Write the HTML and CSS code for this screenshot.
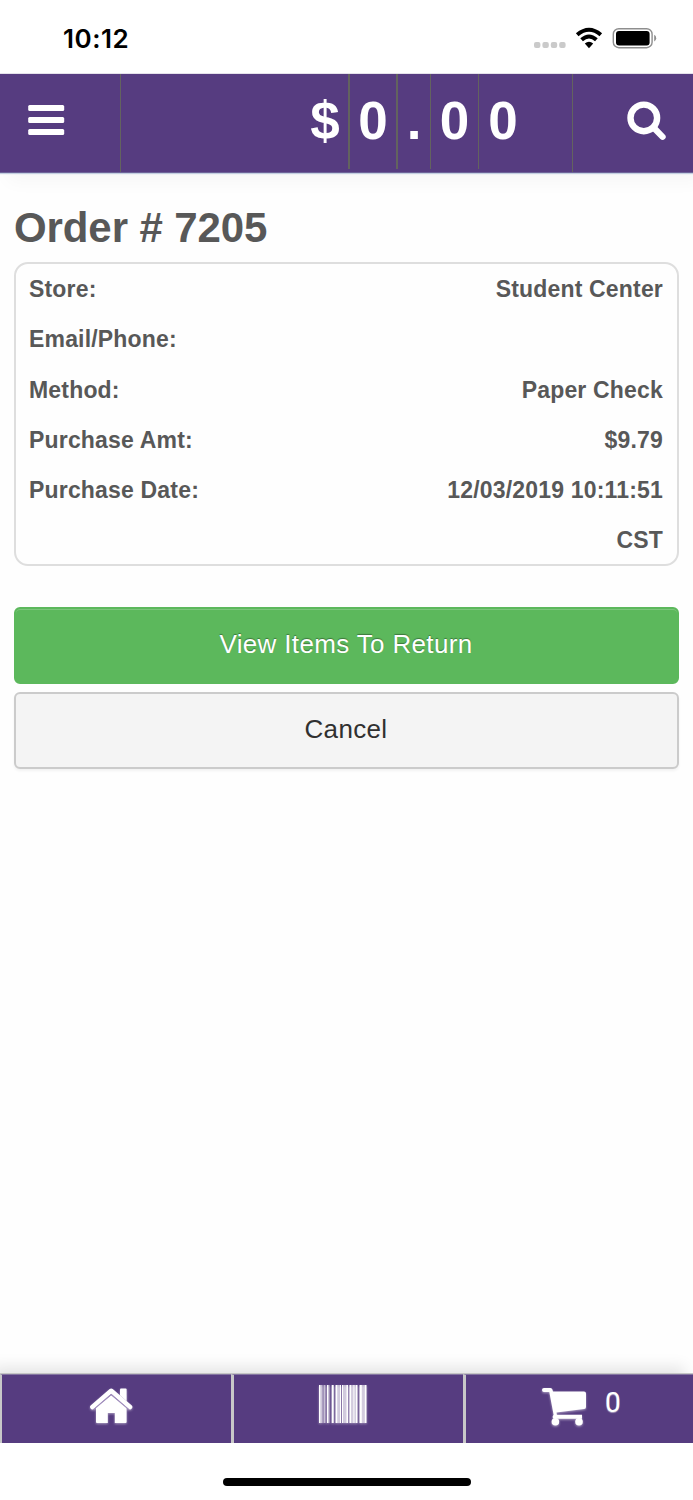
FILE: index.html
```html
<!DOCTYPE html>
<html lang="en">
<head>
<meta charset="utf-8">
<title>Order # 7205</title>
<link rel="stylesheet" href="styles.css">
</head>
<body>
<div class="status">
  <span class="clock">10:12</span>
  <svg class="status-icons" viewBox="0 0 126 24" width="126" height="24">
    <g fill="#cacaca"><rect x="4" y="14" width="6.4" height="6" rx="2"/><rect x="12.4" y="14" width="6.4" height="6" rx="2"/><rect x="20.8" y="14" width="6.4" height="6" rx="2"/><rect x="29.2" y="14" width="6.4" height="6" rx="2"/></g>
    <g fill="none" stroke="#000" stroke-width="4"><path d="M47.2 6.8Q59-3.2 70.8 6.8"/><path d="M51.6 11.8Q59 5.2 66.4 11.8"/></g>
    <path d="M54.8 15.6Q59 12.1 63.2 15.6L59 20.2Z"/>
    <rect x="83.3" y="0.7" width="38.8" height="19" rx="5.5" fill="none" stroke="#8e8e8e" stroke-width="1.4"/>
    <rect x="86" y="3" width="33.6" height="14.4" rx="3"/>
    <path d="M124.2 6.8q2 1 2 3.4t-2 3.4z" fill="#8e8e8e"/>
  </svg>
</div>
<header class="topbar">
  <div class="menu">
    <svg width="37" height="31" viewBox="0 0 37 31" fill="#fff"><rect x=".2" y="0" width="36" height="6" rx="1.5"/><rect x=".2" y="12" width="36" height="6" rx="1.5"/><rect x=".2" y="24" width="36" height="6" rx="1.5"/></svg>
  </div>
  <div class="total"><span>$</span><span>0</span><span class="point">.</span><span>0</span><span>0</span></div>
  <div class="search">
    <svg width="40" height="40" viewBox="0 0 40 40" fill="none" stroke="#fff"><circle cx="16.8" cy="16.9" r="13.3" stroke-width="6.4"/><path d="M27 27L35.6 35.8" stroke-width="6.2" stroke-linecap="round"/></svg>
  </div>
</header>
<main class="content">
  <h1>Order # 7205</h1>
  <dl class="details">
    <div><dt>Store:</dt><dd>Student Center</dd></div>
    <div><dt>Email/Phone:</dt><dd></dd></div>
    <div><dt>Method:</dt><dd>Paper Check</dd></div>
    <div><dt>Purchase Amt:</dt><dd>$9.79</dd></div>
    <div><dt>Purchase Date:</dt><dd>12/03/2019 10:11:51<br>CST</dd></div>
  </dl>
  <div class="actions">
    <button class="btn primary">View Items To Return</button>
    <button class="btn plain">Cancel</button>
  </div>
</main>
<nav class="tabs">
  <div class="tab tab-home">
    <svg width="44" height="38" viewBox="0 0 44 38" fill="#fff"><path d="M31 1.5q0-1 1-1h4.6q1 0 1 1V13L31 7.2z"/><path d="M3.4 19L22.2 2.8 41 19" fill="none" stroke="#fff" stroke-width="4.6" stroke-linecap="round" stroke-linejoin="round"/><path d="M7 19.5L22.2 7.2 37.6 19.5V34q0 1-1 1H25.8V25h-7v10H8q-1 0-1-1z"/><path d="M4.8 21.4L22.2 6.5 39.6 21.4" fill="none" stroke="#9f8cbc" stroke-width="1.1"/></svg>
  </div>
  <div class="tab tab-scan">
    <svg width="50" height="40" viewBox="0 0 50 40" fill="#fff"><path d="M1 0h1.6v38H1zM8.9 0H10v38H8.9zM13.7 0h2v38h-2zM18 0h1.2v38H18zM22 0h1v38h-1zM24 0h1.6v38H24zM28.2 0h1.8v38h-1.8zM31.8 0h1.6v38h-1.6zM35.2 0h1.5v38h-1.5zM38 0h1.5v38H38zM41.5 0h2.4v38h-2.4zM46.5 0h2v38h-2z"/><path opacity=".6" d="M2.6 0h2v38h-2zM5.5 0h2v38h-2zM10 0h1.5v38H10zM17.2 0h4.8v38h-4.8zM26 0h2v38h-2zM30.8 0h1v38h-1zM33.4 0h1.8v38h-1.8zM36.7 0H38v38h-1.3zM43.9 0h2.6v38h-2.6z"/></svg>
  </div>
  <div class="tab tab-cart">
    <svg width="46" height="40" viewBox="0 0 46 40" fill="#fff"><path d="M3 1h6.5q1.5 0 1.9 1.5l.6 2H43q2 0 2 2V20q0 1.8-1.9 2.1L15.5 25.5l.4 2.3H41v4H13.3q-1.7 0-1.7-1.8 0-1 1-2.2L8.3 5H3Q1 5 1 3t2-2z"/><circle cx="14.4" cy="34.7" r="3.8"/><circle cx="38" cy="34.7" r="3.8"/></svg>
    <span>0</span>
  </div>
</nav>
<div class="home-area"><div class="home-indicator"></div></div>
</body>
</html>
```
FILE: styles.css
```css
* { box-sizing: border-box; }
body {
  margin: 0;
  height: 1500px;
  display: flex;
  flex-direction: column;
  overflow: hidden;
  background: #fefefe;
  color: #585858;
  font-family: "Liberation Sans", Arial, sans-serif;
}
svg { display: block; flex: none; overflow: visible; }

.status {
  height: 74px;
  flex: none;
  display: flex;
  justify-content: space-between;
  align-items: flex-start;
  padding: 28px 37px 0 63px;
  background: #fff;
  border-bottom: 1px solid #e5e2eb;
}
.clock {
  font: 600 26px/21px Inter, sans-serif;
  letter-spacing: .5px;
  color: #000;
}

.topbar {
  height: 99px;
  flex: none;
  display: flex;
  background: #563c80;
  border-bottom: 1px solid #6d6398;
  box-shadow: 0 1px 1px #c3cfe0, 8px 8px 18px rgba(0, 0, 0, .035);
}
.menu {
  width: 121px;
  padding: 31px 0 0 28px;
  border-right: 1px solid #63635f;
}
.total {
  flex: 1;
  display: flex;
  align-items: flex-start;
  justify-content: flex-end;
  padding-right: 45px;
  color: #fff;
  font: bold 53px/94px "Liberation Sans", Arial, sans-serif;
}
.total span {
  width: 48px;
  height: 95px;
  border-right: 2px solid #63635f;
  text-align: center;
}
.total .point { width: 33px; }
.total span:nth-child(n+3) { border-right-width: 1px; }
.total span:last-child { border-right: 0; }
.search {
  width: 121px;
  padding: 27px 0 0 54px;
  border-left: 1px solid #63635f;
}

.content { flex: 1; padding: 0 14px; }
h1 {
  margin: 0;
  padding-top: 31px;
  font-size: 42px;
  line-height: 48px;
  height: 89px;
  letter-spacing: -.1px;
}
.details {
  margin: 0;
  height: 304px;
  padding: .3px 14px 0 13px;
  border: 2px solid #dedede;
  border-radius: 14px;
  font: bold 23px/50.15px "Liberation Sans", Arial, sans-serif;
  letter-spacing: .18px;
}
.details div { display: flex; justify-content: space-between; min-height: 50.15px; }
.details dd { margin: 0; text-align: right; }
.actions {
  display: flex;
  flex-direction: column;
  gap: 8px;
  padding-top: 41px;
}
.btn {
  height: 77px;
  padding: 0 1px 3px 0;
  border-radius: 6px;
  font: 26px/30px "Liberation Sans", Arial, sans-serif;
  letter-spacing: .35px;
}
.primary {
  border: 2px solid #5cb85c;
  background: #5cb85c;
  box-shadow: inset 0 1px 0 #7dc67d;
  color: #fff;
  text-shadow: 0 -1px 1px rgba(0, 0, 0, .35);
}
.plain {
  border: 2px solid #cbcbcb;
  background: #f4f4f4;
  box-shadow: 0 2px 3px rgba(0, 0, 0, .05);
  color: #303030;
}

.tabs {
  height: 70px;
  flex: none;
  display: grid;
  grid-template-columns: 232px 232px 229px;
  border-top: 1px solid #c5c5c5;
  box-shadow: -8px -6px 14px rgba(0, 0, 0, .1);
}
.tab {
  display: flex;
  background: #563c80;
  border-left: 2px solid #c8c8c8;
  border-top: 1px solid #8576a1;
}
.tab + .tab { border-left-width: 3px; margin-left: -1px; }
.tab svg { filter: drop-shadow(0 1px 1px rgba(255, 255, 255, .5)); }
.tab-home { padding: 13px 0 0 87px; }
.tab-scan { padding: 10px 0 0 84px; }
.tab-cart { padding: 12px 0 0 75px; }
.tab-cart span {
  margin-left: 18px;
  color: #fff;
  font: 28px/31px Roboto, sans-serif;
  text-shadow: 0 1px 1px rgba(255, 255, 255, .5);
}
.home-area {
  height: 57px;
  flex: none;
  padding-top: 35px;
  background: #fff;
}
.home-indicator {
  width: 248px;
  height: 8px;
  margin: 0 auto;
  border-radius: 4px;
  background: #000;
}
```
